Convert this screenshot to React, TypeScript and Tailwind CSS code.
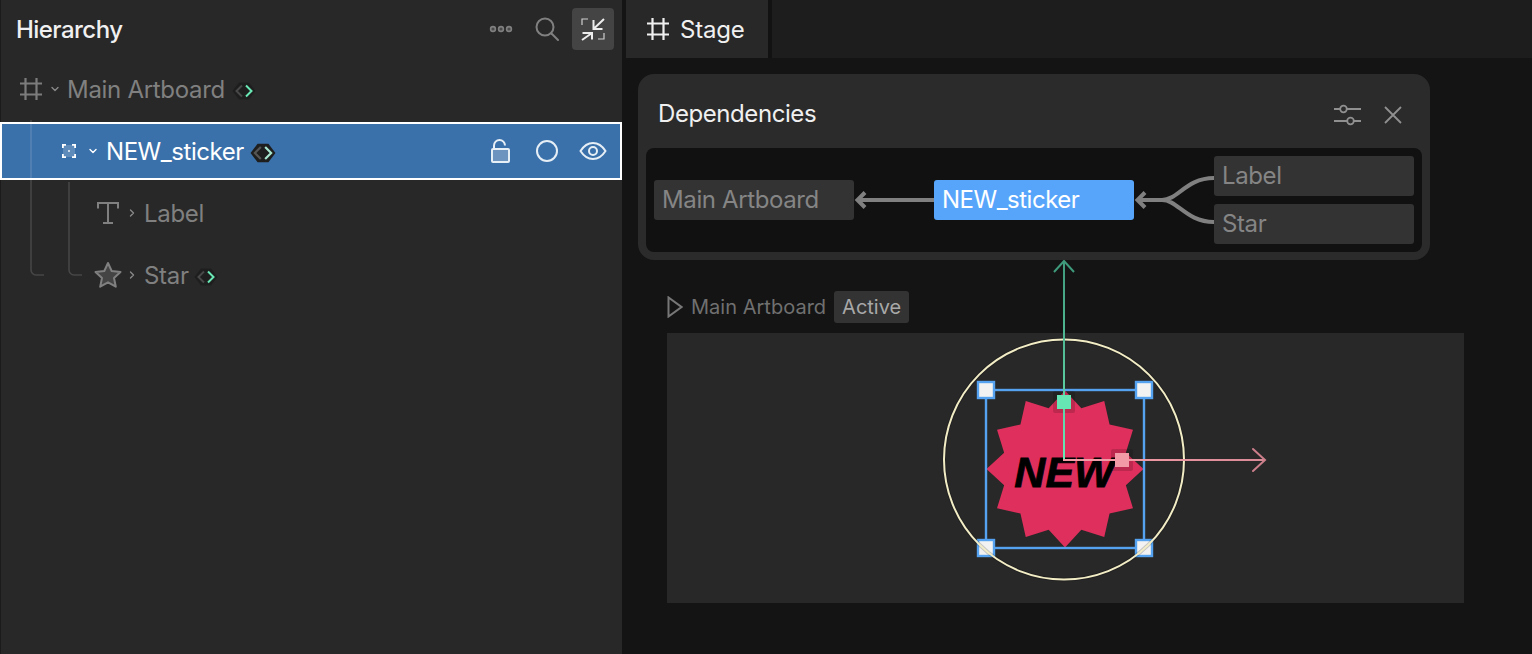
import React from "react";

const Grid = ({ c = "#7c7c7c", s = 24 }: { c?: string; s?: number }) => (
  <svg width={s} height={s} viewBox="0 0 24 24" fill="none" stroke={c} strokeWidth="2.200">
    <path d="M6.500 1v22M17.500 1v22M1 6.500h22M1 17.500h22" />
  </svg>
);

const Chevron = ({ open, c = "#888" }: { open?: boolean; c?: string }) => (
  <svg width="10" height="10" viewBox="0 0 10 10" fill="none" stroke={c} strokeWidth="1.400" strokeLinecap="round" strokeLinejoin="round">
    <path d={open ? "M2 3.500 5 6.500 8 3.500" : "M3.500 2 6.500 5 3.500 8"} />
  </svg>
);

const CodeBadge = ({ selected }: { selected?: boolean }) => (
  <svg width={selected ? 26 : 24} height={selected ? 20 : 18} viewBox="0 0 24 18" fill="none" strokeWidth="2">
    <path d="M7 .5h10l6.500 8.500-6.500 8.500H7L.5 9z" fill="#1e1e1e" />
    <path d="M10 3.500 4.500 9l5.500 5.500" stroke={selected ? "#555" : "#484848"} />
    <path d="M14 3.500 19.500 9 14 14.500" stroke={selected ? "#a8e6cf" : "#6ae8b5"} />
  </svg>
);

const Row = ({ pad, icon, open, label, badge }: { pad: string; icon: React.ReactNode; open?: boolean; label: string; badge?: string }) => (
  <div className={`flex h-[62px] items-center ${pad}`}>
    <div className="flex w-[30px] shrink-0 justify-center">{icon}</div>
    <div className="ml-[2px] flex w-[14px] shrink-0 justify-center"><Chevron open={open} /></div>
    <span className="ml-[5px] pt-[2px] text-[24px] leading-none tracking-[-0.3px] text-[#808080]">{label}</span>
    {badge && <div className={`mt-[3px] ${badge}`}><CodeBadge /></div>}
  </div>
);

const Node = ({ label, tone }: { label: string; tone?: "blue" }) => (
  <div className={`flex h-[40px] w-[200px] items-center rounded-[3px] px-[8px] text-[24px] leading-none ${tone === "blue" ? "bg-[#57a5fb] tracking-[-0.5px] text-white" : "bg-[#333333] tracking-[-0.38px] text-[#858585]"}`}>
    {label}
  </div>
);

const starburst = (() => {
  const pts: string[] = [];
  for (let i = 0; i < 24; i++) {
    const r = i % 2 === 0 ? 78.5 : 63;
    const a = (i * Math.PI) / 12;
    pts.push(`${(80 + r * Math.sin(a)).toFixed(2)},${(80 - r * Math.cos(a)).toFixed(2)}`);
  }
  return pts.join(" ");
})();

export default function App() {
  return (
    <div className="flex h-[654px] w-[1532px] overflow-hidden bg-[#141414] font-['Inter',sans-serif]">
      {/* Hierarchy */}
      <aside className="relative h-full w-[622px] shrink-0 border-l border-[#1b1b1b] bg-[#282828]">
        <header className="flex h-[58px] items-center pl-[15px] pr-[8px]">
          <h1 className="pt-[2px] text-[24px] font-medium leading-none tracking-[-0.55px] text-[#f0f0f0]">Hierarchy</h1>
          <div className="ml-auto flex items-center">
            <svg width="24" height="8" viewBox="0 0 24 8" fill="#4a4a4a" stroke="#808080" strokeWidth="1.600">
              <circle cx="4" cy="4" r="2.400" /><circle cx="12" cy="4" r="2.400" /><circle cx="20" cy="4" r="2.400" />
            </svg>
            <svg className="ml-[22px]" width="24" height="24" viewBox="0 0 24 24" fill="none" stroke="#808080" strokeWidth="2" strokeLinecap="round">
              <circle cx="10" cy="10" r="8.500" /><path d="M16.500 16.500 23 23" />
            </svg>
            <button className="ml-[13px] flex h-[42px] w-[42px] items-center justify-center rounded-[4px] bg-[#444444]">
              <svg width="24" height="24" viewBox="0 0 24 24" fill="none" stroke="#ededed" strokeWidth="2">
                <path d="M23 2 12.500 12M12.500 3v9h9M1 23l10-7M1.500 16H11v6.500" />
                <path d="M1 8V2h6M23 16v6h-6" strokeWidth="1.200" stroke="#cfcfcf" />
              </svg>
            </button>
          </div>
        </header>

        <div className="relative">
          <Row pad="pl-[15px]" icon={<Grid />} open label="Main Artboard" badge="ml-[7px]" />
          <div className="my-[2px] -ml-px flex h-[58px] items-center border-2 border-white bg-[#3b71aa] pl-[60px] pr-[13px]">
            <svg width="14" height="14" viewBox="0 0 14 14" fill="none" stroke="#fff" strokeWidth="1.800">
              <rect x="1" y="1" width="12" height="12" fill="#ffffff30" stroke="none" />
              <path d="M.9 4V.9H4M10 .9h3.100V4M13.100 10v3.100H10M4 13.100H.9V10" />
              <circle cx="7" cy="7" r=".9" fill="#fff" stroke="none" />
            </svg>
            <div className="ml-[10px] flex w-[14px] justify-center"><Chevron open c="#fff" /></div>
            <span className="ml-[6px] pt-[2px] text-[24px] leading-none tracking-[-0.45px] text-white">NEW_sticker</span>
            <div className="ml-[6px] mt-[3px]"><CodeBadge selected /></div>
            <div className="ml-auto flex items-center">
              <svg width="20" height="26" viewBox="0 0 20 26" fill="none" stroke="#e6eef6" strokeWidth="2">
                <rect x="2" y="11" width="17" height="13" rx="1" fill="#ffffff40" />
                <path d="M4 11V6.500a5.500 5.500 0 0 1 11 0" transform="translate(0 1)" />
              </svg>
              <svg className="ml-[25px]" width="24" height="24" viewBox="0 0 24 24" fill="none" stroke="#e6eef6" strokeWidth="2">
                <circle cx="12" cy="12" r="10" />
              </svg>
              <svg className="ml-[20px]" width="28" height="20" viewBox="0 0 28 20" fill="none" stroke="#e6eef6" strokeWidth="2">
                <path d="M1.500 10C5 4.500 9 2 14 2s9 2.500 12.500 8C23 15.500 19 18 14 18S5 15.500 1.500 10z" />
                <circle cx="14" cy="10" r="4" />
              </svg>
            </div>
          </div>
          <Row pad="pl-[92px]" icon={
            <svg width="26" height="24" viewBox="0 0 26 24" fill="none" stroke="#808080" strokeWidth="2">
              <path d="M3 7.500V2h20v5.500M13 2v20M8 22h10" />
            </svg>
          } label="Label" />
          <Row pad="pl-[92px]" icon={
            <svg width="28" height="28" viewBox="0 0 28 28" fill="#444" stroke="#808080" strokeWidth="2" strokeLinejoin="round">
              <path d="M14 2l3.700 8 8.800 1-6.500 6 1.800 8.700L14 21.300 6.200 25.700 8 17 1.500 11l8.800-1z" />
            </svg>
          } label="Star" badge="ml-[5px]" />
          <svg className="pointer-events-none absolute left-0 top-0" width="100" height="240" fill="none" stroke="#ffffff" strokeOpacity="0.14" strokeWidth="1.600">
            <path d="M30 62V212a5 5 0 0 0 5 5h8" />
            <path d="M68 124V212a5 5 0 0 0 5 5h8" />
          </svg>
        </div>
      </aside>

      {/* Stage */}
      <main className="ml-[4px] flex min-w-0 flex-1 flex-col">
        <div className="flex h-[58px] shrink-0 bg-[#1d1d1d]">
          <div className="flex h-full w-[142px] items-center bg-[#282828] pl-[20px]">
            <Grid c="#f0f0f0" />
            <span className="ml-[10px] pt-[2px] text-[24px] leading-none tracking-[-0.2px] text-[#f0f0f0]">Stage</span>
          </div>
          <div className="h-full w-[4px] bg-[#121212]" />
        </div>

        <div className="relative mt-[4px] flex-1 bg-[#141414] pl-[41px] pt-[229px]">
          {/* Artboard */}
          <div className="flex h-[32px] items-center">
            <svg width="16" height="22" viewBox="0 0 16 22" fill="none" stroke="#777" strokeWidth="2"><path d="M1.500 1.500v19l13-9.500z" /></svg>
            <span className="ml-[8px] text-[20px] leading-none tracking-[0.02px] text-[#707070]">Main Artboard</span>
            <span className="ml-[8px] flex h-[32px] w-[75px] items-center justify-center rounded-[3px] bg-[#333333] text-[20px] leading-none text-[#a8a8a8]">Active</span>
          </div>
          <div className="mt-[10px] h-[270px] w-[797px] bg-[#282828]" />

          {/* Gizmo */}
          <svg className="absolute left-0 top-0" width="906" height="592" viewBox="626 62 906 592" fill="none">
            <defs>
              <linearGradient id="g" x1="0" y1="460" x2="0" y2="260" gradientUnits="userSpaceOnUse">
                <stop offset="0" stopColor="#6ae8b5" /><stop offset="1" stopColor="#3f9a7c" />
              </linearGradient>
              <linearGradient id="r" x1="1122" y1="0" x2="1265" y2="0" gradientUnits="userSpaceOnUse">
                <stop offset="0" stopColor="#f29aa5" /><stop offset="1" stopColor="#d88a96" />
              </linearGradient>
            </defs>
            <polygon points={starburst} transform="translate(985 389)" fill="#df2f5c" />
            <text x="1064.500" y="486.500" textAnchor="middle" fontFamily="'Liberation Sans',sans-serif" fontWeight="700" fontStyle="italic" fontSize="43" fill="#000" stroke="#000" strokeWidth="0.8">NEW</text>
            <rect x="986" y="390" width="158" height="158" stroke="#55a3f0" strokeWidth="2.400" />
            {[[986, 390], [1144, 390], [986, 548], [1144, 548]].map(([x, y]) => (
              <rect key={`${x}-${y}`} x={x - 8} y={y - 8} width="16" height="16" fill="#f2f2f2" stroke="#55a3f0" strokeWidth="2.400" />
            ))}
            <circle cx="1064" cy="459.500" r="120" stroke="#000" strokeOpacity="0.18" strokeWidth="4" />
            <circle cx="1064" cy="459.500" r="120" stroke="#f3edc6" strokeWidth="2" />
            <rect x="1053" y="391" width="22" height="22" rx="2" fill="#000" fillOpacity="0.15" />
            <rect x="1111" y="449" width="22" height="22" rx="2" fill="#000" fillOpacity="0.15" />
            <path d="M1064 460V262" stroke="url(#g)" strokeWidth="2" />
            <path d="M1054 272 1064 261l10 11" stroke="#3f9a7c" strokeWidth="2" />
            <path d="M1063 460H1264" stroke="url(#r)" strokeWidth="2" />
            <path d="M1253 449 1265 460l-12 11" stroke="#cc7f8b" strokeWidth="2" strokeLinecap="round" />
            <rect x="1057" y="395" width="14" height="14" fill="#66e6b3" />
            <rect x="1115" y="453" width="14" height="14" fill="#f29aa5" />
          </svg>

          {/* Dependencies */}
          <section className="absolute left-[12px] top-[12px] h-[186px] w-[792px] rounded-[16px] bg-[#2b2b2b] p-[8px]">
            <div className="flex h-[66px] items-center pl-[12px] pr-[19px]">
              <h2 className="pb-[2px] text-[24px] leading-none tracking-[-0.42px] text-[#f0f0f0]">Dependencies</h2>
              <svg className="ml-auto" width="28" height="24" viewBox="0 0 28 24" fill="none" stroke="#909090" strokeWidth="1.800">
                <path d="M0 6h6M12.500 6H27M0 18h13M20 18h7" /><circle cx="9.500" cy="6" r="3.300" /><circle cx="16.500" cy="18" r="3.300" />
              </svg>
              <svg className="ml-[21px]" width="20" height="20" viewBox="0 0 20 20" fill="none" stroke="#909090" strokeWidth="1.800"><path d="M2 2l16 16M18 2 2 18" /></svg>
            </div>
            <div className="flex h-[104px] items-center rounded-[8px] bg-[#111111] px-[8px]">
              <Node label="Main Artboard" />
              <svg className="shrink-0" width="80" height="24" viewBox="0 0 80 24" fill="none" stroke="#808080" strokeWidth="4">
                <path d="M4 12h76M11 4.500l-7.500 7.500 7.500 7.500" />
              </svg>
              <Node label="NEW_sticker" tone="blue" />
              <svg className="shrink-0" width="80" height="84" viewBox="0 0 80 84" fill="none" stroke="#808080" strokeWidth="4">
                <path d="M4 42H28C44 42 52 20 80 20M28 42C44 42 52 64 80 64" /><path d="M11 34.500l-7.500 7.500 7.500 7.500" />
              </svg>
              <div className="flex flex-col gap-[8px]">
                <Node label="Label" />
                <Node label="Star" />
              </div>
            </div>
          </section>
        </div>
      </main>
    </div>
  );
}
